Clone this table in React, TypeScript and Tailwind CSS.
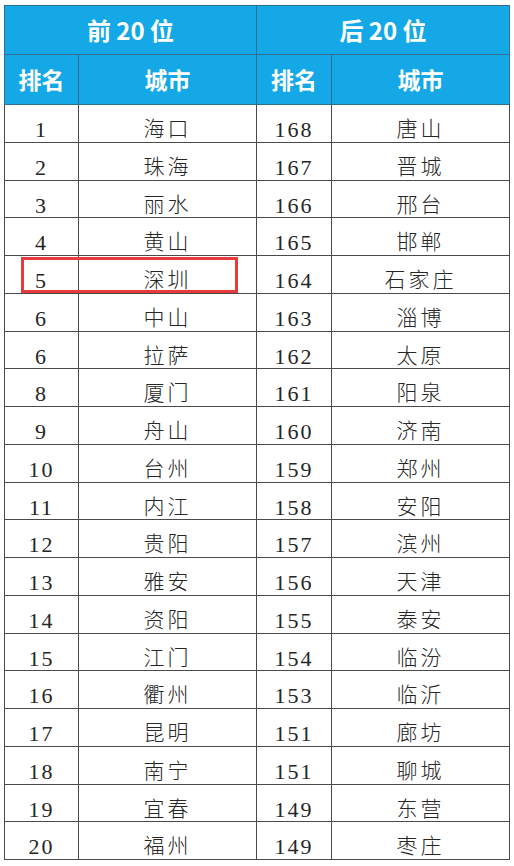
const ROWS: [string, string, string, string][] = [
  ['1', '海口', '168', '唐山'],
  ['2', '珠海', '167', '晋城'],
  ['3', '丽水', '166', '邢台'],
  ['4', '黄山', '165', '邯郸'],
  ['5', '深圳', '164', '石家庄'],
  ['6', '中山', '163', '淄博'],
  ['6', '拉萨', '162', '太原'],
  ['8', '厦门', '161', '阳泉'],
  ['9', '舟山', '160', '济南'],
  ['10', '台州', '159', '郑州'],
  ['11', '内江', '158', '安阳'],
  ['12', '贵阳', '157', '滨州'],
  ['13', '雅安', '156', '天津'],
  ['14', '资阳', '155', '泰安'],
  ['15', '江门', '154', '临汾'],
  ['16', '衢州', '153', '临沂'],
  ['17', '昆明', '151', '廊坊'],
  ['18', '南宁', '151', '聊城'],
  ['19', '宜春', '149', '东营'],
  ['20', '福州', '149', '枣庄'],
];

const head = "border border-[#2f6f93] bg-[#14a8e6] text-white font-bold";
const cell =
  "border-[1.5px] border-[#4a4a4a] h-[37.75px] p-0 pt-[14px] text-center align-top leading-none";

export default function App() {
  return (
    <div className="min-h-[866px] w-[514px] bg-white pl-[4px] pt-[5px]">
      <div className="relative w-[505px]">
        <table
          className="w-[505px] table-fixed border-collapse"
          style={{ fontFamily: '"Noto Sans CJK SC", sans-serif' }}
        >
          <colgroup>
            <col className="w-[74px]" />
            <col className="w-[178px]" />
            <col className="w-[75px]" />
            <col className="w-[178px]" />
          </colgroup>
          <thead>
            <tr className="h-[49px]">
              <th colSpan={2} className={`${head} text-[24px]`}>
                前 20 位
              </th>
              <th colSpan={2} className={`${head} text-[24px]`}>
                后 20 位
              </th>
            </tr>
            <tr className="h-[50px]">
              <th className={`${head} text-[23px]`}>排名</th>
              <th className={`${head} text-[23px]`}>城市</th>
              <th className={`${head} text-[23px]`}>排名</th>
              <th className={`${head} text-[23px]`}>城市</th>
            </tr>
          </thead>
          <tbody
            className="text-[#262626]"
            style={{ fontFamily: '"Liberation Serif", "Noto Sans CJK SC", serif' }}
          >
            {ROWS.map(([a, b, c, d], i) => (
              <tr key={i}>
                <td className={`${cell} text-[22px] tracking-[2px]`}>{a}</td>
                <td className={`${cell} text-[21px] font-light tracking-[3px]`}>{b}</td>
                <td className={`${cell} text-[22px] tracking-[2px]`}>{c}</td>
                <td className={`${cell} text-[21px] font-light tracking-[3px]`}>{d}</td>
              </tr>
            ))}
          </tbody>
        </table>
        <div className="pointer-events-none absolute left-[17px] top-[252px] h-[36px] w-[217px] border-[3px] border-[#e8393c]" />
      </div>
    </div>
  );
}
